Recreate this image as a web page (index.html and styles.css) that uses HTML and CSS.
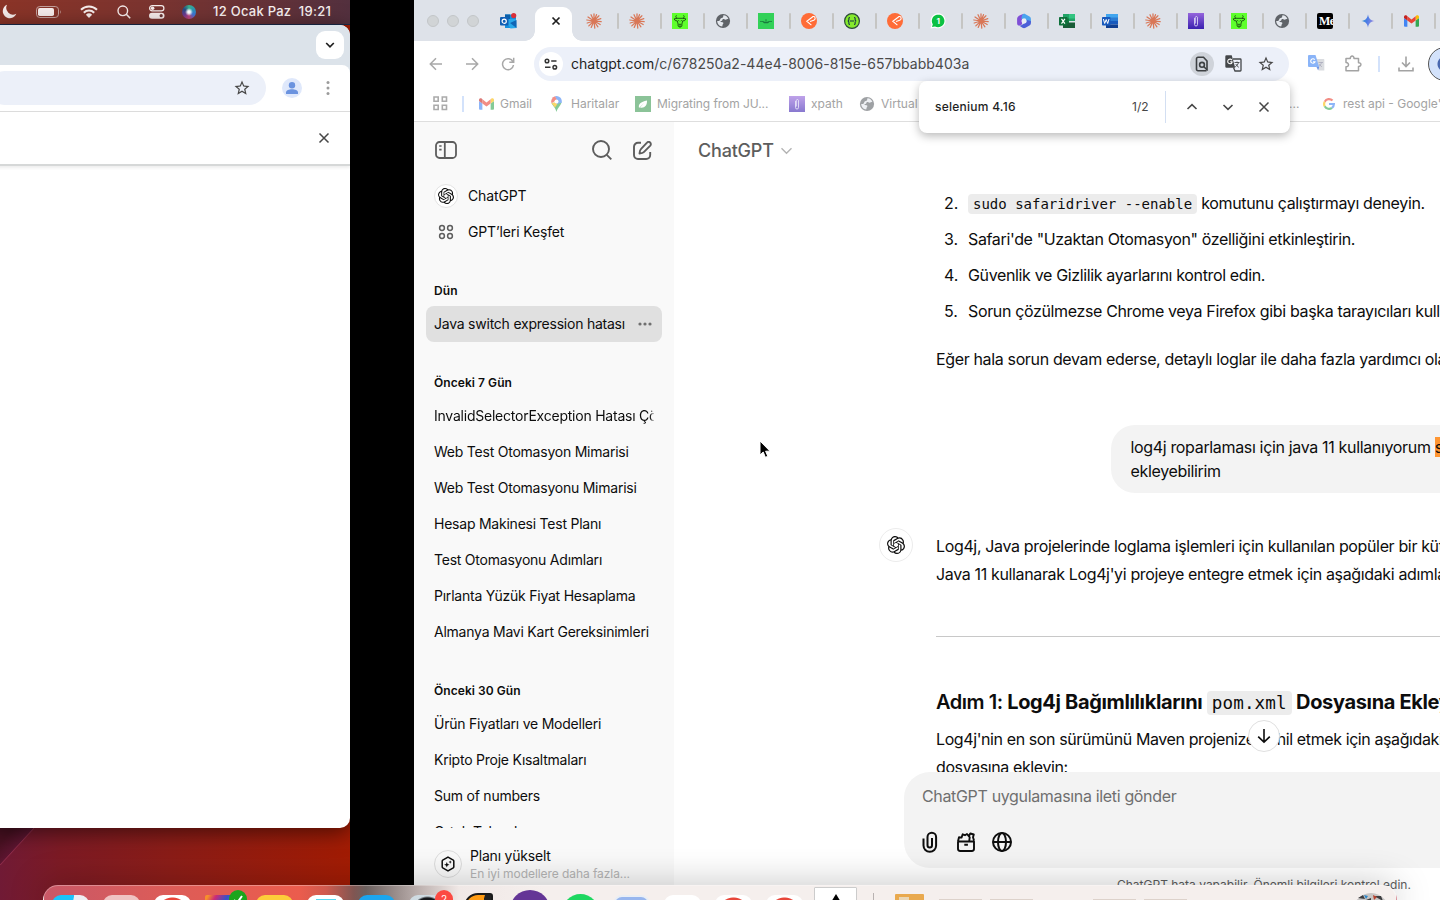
FILE: index.html
```html
<!DOCTYPE html>
<html lang="tr">
<head>
<meta charset="utf-8">
<title>ChatGPT</title>
<link rel="stylesheet" href="styles.css">
</head>
<body>
<svg class="sprite" aria-hidden="true">
  <symbol id="openai" viewBox="0 0 24 24"><path fill="currentColor" d="M22.2819 9.8211a5.9847 5.9847 0 0 0-.5157-4.9108 6.0462 6.0462 0 0 0-6.5098-2.9A6.0651 6.0651 0 0 0 4.9807 4.1818a5.9847 5.9847 0 0 0-3.9977 2.9 6.0462 6.0462 0 0 0 .7427 7.0966 5.98 5.98 0 0 0 .511 4.9107 6.051 6.051 0 0 0 6.5146 2.9001A5.9847 5.9847 0 0 0 13.2599 24a6.0557 6.0557 0 0 0 5.7718-4.2058 5.9894 5.9894 0 0 0 3.9977-2.9001 6.0557 6.0557 0 0 0-.7475-7.0729zm-9.022 12.6081a4.4755 4.4755 0 0 1-2.8764-1.0408l.1419-.0804 4.7783-2.7582a.7948.7948 0 0 0 .3927-.6813v-6.7369l2.02 1.1686a.071.071 0 0 1 .038.052v5.5826a4.504 4.504 0 0 1-4.4945 4.4944zm-9.6607-4.1254a4.4708 4.4708 0 0 1-.5346-3.0137l.142.0852 4.783 2.7582a.7712.7712 0 0 0 .7806 0l5.8428-3.3685v2.3324a.0804.0804 0 0 1-.0332.0615L9.74 19.9502a4.4992 4.4992 0 0 1-6.1408-1.6464zM2.3408 7.8956a4.485 4.485 0 0 1 2.3655-1.9728V11.6a.7664.7664 0 0 0 .3879.6765l5.8144 3.3543-2.0201 1.1685a.0757.0757 0 0 1-.071 0l-4.8303-2.7865A4.504 4.504 0 0 1 2.3408 7.872zm16.5963 3.8558L13.1038 8.364 15.1192 7.2a.0757.0757 0 0 1 .071 0l4.8303 2.7913a4.4944 4.4944 0 0 1-.6765 8.1042v-5.6772a.79.79 0 0 0-.407-.667zm2.0107-3.0231l-.142-.0852-4.7735-2.7818a.7759.7759 0 0 0-.7854 0L9.409 9.2297V6.8974a.0662.0662 0 0 1 .0284-.0615l4.8303-2.7866a4.4992 4.4992 0 0 1 6.6802 4.66zM8.3065 12.863l-2.02-1.1638a.0804.0804 0 0 1-.038-.0567V6.0742a4.4992 4.4992 0 0 1 7.3757-3.4537l-.142.0805L8.704 5.459a.7948.7948 0 0 0-.3927.6813zm1.0976-2.3654l2.602-1.4998 2.6069 1.4998v2.9994l-2.5974 1.4997-2.6067-1.4997Z"/></symbol>
  <symbol id="star" viewBox="0 0 24 24"><path fill="currentColor" d="M22 9.24l-7.19-.62L12 2 9.19 8.63 2 9.24l5.46 4.73L5.82 21 12 17.27 18.18 21l-1.63-7.03L22 9.24zM12 15.4l-3.76 2.27 1-4.28-3.32-2.88 4.38-.38L12 6.1l1.71 4.04 4.38.38-3.32 2.88 1 4.28L12 15.4z"/></symbol>
  <symbol id="globe" viewBox="0 0 16 16"><circle cx="8" cy="8" r="7.100" fill="#5f6368"/><path fill="#e3e7ed" d="M8.600 2.300c2.200.2 4 1.600 4.800 3.500-1.400 0-1.800.9-2.900 1-1.100 0-1.400-.9-2.400-.7-.9.300-.3 1.300-1.200 1.600-.8.300-1.400 0-1.400.8 0 .7 1.400.5 2.300.8.900.4.700 1.300.2 1.800-.6.500-.3 1.500-.8 2.500-2.800-.4-5-2.700-5-5.600.8.200 1.900.1 2.500-.6.700-.8.300-1.700 1.300-2.200 1-.4 2.200-.5 2.200-1.500 0-.600-.100-1 .400-1.400z"/></symbol>
  <symbol id="claude" viewBox="0 0 16 16"><g stroke="#d97757" stroke-width="1.25" stroke-linecap="round"><path d="M8 8V.9M8 8l2.500-6.300M8 8l4.900-5.200M8 8l6.800-2.300M8 8l7.200.6M8 8l6.200 3.500M8 8l3.900 5.800M8 8l.8 7.100M8 8l-2.800 6.400M8 8l-5.200 4.900M8 8l-6.800 2M8 8L.9 7M8 8L2 4M8 8L5 1.700"/></g></symbol>
  <symbol id="goat" viewBox="0 0 16 16"><path fill="#5eff2c" d="M0 0h16v16H0z"/><path d="M4.500 2.300c-1.300 1.300-.7 2.500.8 3h5.400c1.500-.5 2.100-1.700.8-3M5.300 5.300l-3.200.6 1.200 1.700 2 .3.800 3.200v2l1.900 1.200 1.900-1.200v-2l.8-3.200 2-.3 1.200-1.700-3.200-.6M6.300 7.400l1 .7M9.700 7.400l-1 .7M6.700 11.300h2.600M7 13.100h2" fill="none" stroke="#174b12" stroke-width=".9"/></symbol>
  <symbol id="postman" viewBox="0 0 16 16"><circle cx="8" cy="8" r="8" fill="#ff6c37"/><path d="M11.800 3.800L5.800 8.200l4.600 3.900M11.300 3.700a1.900 1.900 0 1 1 1.400 3.500L9 8.600" fill="none" stroke="#fff" stroke-width="1.100"/></symbol>
  <symbol id="gmail" viewBox="0 0 16 12"><path fill="#4285f4" d="M1 12h2.600V5.400L0 2.700V11a1 1 0 0 0 1 1z"/><path fill="#34a853" d="M12.400 12H15a1 1 0 0 0 1-1V2.700l-3.600 2.700z"/><path fill="#fbbc04" d="M12.400 1v4.400L16 2.700V1.500C16 .1 14.300-.7 13.200.2z"/><path fill="#ea4335" d="M3.600 5.400V1L8 4.300 12.400 1v4.400L8 8.700z"/><path fill="#c5221f" d="M0 1.500v1.200l3.600 2.700V1L2.800.2C1.700-.7 0 .1 0 1.500z"/></symbol>
  <symbol id="clip" viewBox="0 0 16 16"><defs><linearGradient id="cg" x2="0" y2="1"><stop stop-color="#9565dc"/><stop offset="1" stop-color="#3a20b0"/></linearGradient></defs><path fill="url(#cg)" d="M0 0h16v16H0z"/><path d="M6.500 5v6.500a1.500 1.500 0 0 0 3 0V4.200a1.200 1.200 0 0 0-2.200 0V10.500" fill="none" stroke="#d8d1f4" stroke-width=".9"/></symbol>
  <symbol id="close" viewBox="0 0 12 12"><path d="M1.500 1.500l9 9m0-9l-9 9" fill="none" stroke="currentColor" stroke-width="1.500"/></symbol>
  <symbol id="close-bold" viewBox="0 0 10 10"><path d="M1.500 1.500l7 7m0-7l-7 7" fill="none" stroke="currentColor" stroke-width="1.700"/></symbol>
  <symbol id="chev" viewBox="0 0 12 12"><path d="M1.500 4l4.500 4.300L10.500 4" fill="none" stroke="currentColor" stroke-width="1.600"/></symbol>
</svg>

<div class="desktop">
  <section class="screen-left">
    <header class="menubar">
      <svg width="15" height="15" viewBox="0 0 15 15"><path fill="#f6eceb" d="M5 .8a7 7 0 1 0 9.300 9A6.800 6.800 0 0 1 5 .8z"/></svg>
      <svg class="m-batt" width="26" height="12" viewBox="0 0 26 12"><rect x=".5" y=".5" width="22" height="11" rx="3.300" fill="none" stroke="#c3a09c"/><rect x="2" y="2" width="16" height="8" rx="1.800" fill="#f6eceb"/><path d="M24 4q1.600 2 0 4z" fill="#c3a09c"/></svg>
      <svg class="m-wifi" width="18" height="13" viewBox="0 0 18 13"><g fill="none" stroke="#f6eceb" stroke-width="2"><path d="M1 4.700a11.500 11.500 0 0 1 16 0M3.800 7.700a7.500 7.500 0 0 1 10.400 0"/></g><path fill="#f6eceb" d="M5.900 9.700a4.500 4.500 0 0 1 6.200 0L9 13z"/></svg>
      <svg class="m-find" width="14" height="14" viewBox="0 0 14 14"><circle cx="5.800" cy="5.800" r="4.800" fill="none" stroke="#f6eceb" stroke-width="1.400"/><path d="M9.300 9.300l3.900 3.900" stroke="#f6eceb" stroke-width="1.600"/></svg>
      <svg class="m-ctl" width="16" height="14" viewBox="0 0 16 14"><rect x=".6" y=".6" width="14.300" height="5.300" rx="2.600" fill="none" stroke="#f6eceb" stroke-width="1.200"/><circle cx="3.600" cy="3.200" r="1.800" fill="#f6eceb"/><rect x="0" y="7.700" width="15.500" height="6" rx="3" fill="#f6eceb"/><circle cx="12.200" cy="10.700" r="1.600" fill="#6b3534"/></svg>
      <span class="siri"></span>
      <span class="clock">12 Ocak Paz&nbsp; 19:21</span>
    </header>
    <div class="window-left">
      <div class="wl-tabs"><span class="wl-drop"><svg width="10" height="10" viewBox="0 0 10 10"><path d="M1.200 3L5 6.800 8.800 3" fill="none" stroke="#1f1f1f" stroke-width="1.700"/></svg></span></div>
      <div class="wl-bar">
        <span class="wl-omni"><svg width="18" height="18"><use href="#star"/></svg></span>
        <svg class="wl-user" width="20" height="20" viewBox="0 0 20 20"><circle cx="10" cy="10" r="10" fill="#dfe8fb"/><circle cx="10" cy="7.200" r="3.200" fill="#6b93df"/><path fill="#6b93df" d="M4 16v-1.600c0-2 3-3.200 6-3.200s6 1.200 6 3.200V16z"/></svg>
        <svg width="4" height="14" viewBox="0 0 4 14" fill="#9b9b9b"><circle cx="2" cy="1.600" r="1.500"/><circle cx="2" cy="7" r="1.500"/><circle cx="2" cy="12.400" r="1.500"/></svg>
      </div>
      <div class="wl-info"><svg width="12" height="12"><use href="#close"/></svg></div>
    </div>
  </section>
  <div class="bezel"></div>

  <section class="window">
    <div class="tabs">
      <div class="lights"><i></i><i></i><i></i></div>
      <svg class="outlook" width="17" height="16" viewBox="0 0 17 16"><path fill="#1490df" d="M5 1.500h11V15H5z"/><path fill="#28a8ea" d="M5 6h11l.5 9-6 .5z"/><path fill="#0a5fa8" d="M5 1.500h5V6H5z"/><path fill="#1066b5" d="M10 10l6.500-3v8z"/><rect x="0" y="4" width="8.500" height="8.500" rx="1" fill="#0f5eb4"/><circle cx="4.200" cy="8.200" r="2.100" fill="none" stroke="#fff" stroke-width="1.200"/><circle cx="13.700" cy="2.600" r="2.600" fill="#d9303a"/></svg>
      <div class="tab-active"><svg width="10" height="10"><use href="#close-bold"/></svg></div>
      <div class="tab"><svg><use href="#claude"/></svg></div>
      <div class="tab"><svg><use href="#claude"/></svg></div>
      <div class="tab"><svg><use href="#goat"/></svg></div>
      <div class="tab"><svg><use href="#globe"/></svg></div>
      <div class="tab"><svg viewBox="0 0 16 16"><path fill="#32d158" d="M0 0h16v16H0z"/><path d="M2 8h3l1.500.7h3L11 8h3v.8h-2.500L10 10.200H6L4.500 8.800H2zM7.500 6.200h1v2h-1z" fill="#187a3c"/></svg></div>
      <div class="tab"><svg><use href="#postman"/></svg></div>
      <div class="tab"><svg viewBox="0 0 16 16"><circle cx="8" cy="8" r="7.400" fill="#85ea2d" stroke="#2b4a3a" stroke-width="1.200"/><path d="M6 4.500c-1.500 0-1.100 1-1.100 2S4.500 8 3.700 8c.8 0 1.200.5 1.200 1.500s-.4 2 1.100 2M10 4.500c1.500 0 1.100 1 1.100 2s.4 1.500 1.200 1.500c-.8 0-1.200.5-1.200 1.500s.4 2-1.100 2M6 8h4" fill="none" stroke="#173647" stroke-width="1.100"/></svg></div>
      <div class="tab"><svg><use href="#postman"/></svg></div>
      <div class="tab"><svg viewBox="0 0 16 16"><path d="M.5 15.500l1-4A7.500 7.500 0 1 1 5 14.700z" fill="#fff"/><path d="M2 14l.8-2.700A6.300 6.300 0 1 1 5 13.400z" fill="#0bc143"/><text x="8.200" y="11.300" text-anchor="middle" class="wa">1</text></svg></div>
      <div class="tab"><svg><use href="#claude"/></svg></div>
      <div class="tab"><svg viewBox="0 0 16 16"><path fill="#7f4fd6" d="M8 .9C4 1.600 1.100 3.300 1.100 6v4.200c0 1.800 1.500 2.900 3.400 2L6 11.200V5.500z"/><path fill="#4aa4ee" d="M7 1.200c.8-.5 1.700-.5 2.500 0l4 2.300c.9.6 1.400 1.400 1.400 2.500v4L10 8 9.500 5.500 5.500 6C5.500 4 5.800 2 7 1.200z"/><path fill="#4b5fd8" d="M14.900 8v2c0 1-.5 1.900-1.400 2.400l-4 2.400c-1 .6-2 .6-3 0L3 12.600c1.500.2 2.500-.3 3.500-1l3.500-2.100L11 7z"/><circle cx="8" cy="8" r="2.500" fill="#e8edf5"/></svg></div>
      <div class="tab"><svg viewBox="0 0 16 16"><path fill="#21a366" d="M4 1h12v7H4z"/><path fill="#107c41" d="M4 5.500h6V15H4z"/><path fill="#185c37" d="M10 9.500h6V15H4v-4z"/><path fill="#33c481" d="M10 1h6v4.500h-6z"/><rect y="4" width="8.500" height="8.500" rx=".8" fill="#0f703b"/><path d="M2.500 5.800l3.400 4.800M5.900 5.800l-3.400 4.800" stroke="#fff" stroke-width="1.200"/></svg></div>
      <div class="tab"><svg viewBox="0 0 16 16"><path fill="#41a5ee" d="M4 1h12v4H4z"/><path fill="#2b7cd3" d="M4 4.500h12V8H4z"/><path fill="#185abd" d="M4 8h12v3.500H4z"/><path fill="#103f91" d="M4 11.500h12V15H4z"/><rect y="4" width="8.500" height="8.500" rx=".8" fill="#185abd"/><path d="M1.400 6l1.300 4.500L4.200 6.500l1.500 4L7 6" fill="none" stroke="#fff"/></svg></div>
      <div class="tab"><svg><use href="#claude"/></svg></div>
      <div class="tab"><svg><use href="#clip"/></svg></div>
      <div class="tab"><svg><use href="#goat"/></svg></div>
      <div class="tab"><svg><use href="#globe"/></svg></div>
      <div class="tab"><span class="medium">Me</span></div>
      <div class="tab"><svg viewBox="0 0 16 16"><defs><linearGradient id="gem" x2="1" y2=".2"><stop stop-color="#2aa0c8"/><stop offset=".5" stop-color="#4b7be6"/><stop offset="1" stop-color="#9a8fe0"/></linearGradient></defs><path fill="url(#gem)" d="M8 1.300C8.600 5.500 10.500 7.400 14.700 8 10.500 8.600 8.600 10.500 8 14.700 7.400 10.500 5.500 8.600 1.300 8 5.500 7.400 7.400 5.500 8 1.300z"/></svg></div>
      <div class="tab"><svg class="tab-gmail"><use href="#gmail"/></svg></div>
    </div>

    <div class="toolbar">
      <div class="nav">
        <svg width="14" height="14" viewBox="0 0 14 14"><path d="M13 7H1.500M7 1.300L1.300 7 7 12.700"/></svg>
        <svg width="14" height="14" viewBox="0 0 14 14"><path d="M1 7h11.500M7 1.300L12.700 7 7 12.700"/></svg>
        <svg width="14" height="14" viewBox="0 0 14 14"><path d="M12 4.800A5.500 5.500 0 1 0 12.500 8M12.700.8v4.400H8.300"/></svg>
      </div>
      <div class="omnibox">
        <span class="site"><svg width="14" height="12" viewBox="0 0 14 12" fill="none" stroke="#333" stroke-width="1.500"><circle cx="3" cy="3" r="1.800"/><path d="M7.200 3h5.300M1 9.300h5.500"/><circle cx="10.800" cy="9.300" r="1.800"/></svg></span>
        <span class="url"><b>chatgpt.com</b>/c/678250a2-44e4-8006-815e-657bbabb403a</span>
        <span class="find-btn"><svg width="14" height="16" viewBox="0 0 14 16" fill="none" stroke="#3d4043" stroke-width="1.600"><path d="M12 13.500V5L8.500 1.300H3A1.500 1.500 0 0 0 1.500 2.800v10.400a1.500 1.500 0 0 0 1.500 1.500h8.500"/><circle cx="7" cy="8.800" r="2.400"/><path d="M8.700 10.500l4 4"/></svg></span>
        <svg class="trans" width="17" height="17" viewBox="0 0 17 17"><path d="M8 4h7.200c.5 0 .8.300.8.800v10.400c0 .5-.3.800-.8.800H10L8.500 12.500" fill="none" stroke="#44474a" stroke-width="1.300"/><path fill="#44474a" d="M1.500.3h5.200l3.500 12.500H1.500A1.200 1.200 0 0 1 .3 11.600V1.500A1.200 1.200 0 0 1 1.500.3z"/><path d="M7 5.200A2.300 2.300 0 1 0 7 7.600V6.700H5.200" fill="none" stroke="#fff" stroke-width="1.100"/><path d="M9.500 7.500h5M12 6.500v1M13.500 7.500c-.5 2-1.800 3.500-3.300 4.300M10.800 9c.7 1.500 1.700 2.500 3 3.300" fill="none" stroke="#44474a" stroke-width=".9"/></svg>
        <svg class="o-star" width="18" height="18"><use href="#star"/></svg>
      </div>
      <svg class="gt" width="17" height="17" viewBox="0 0 17 17"><path fill="#dadce0" d="M7 4h8.500c.6 0 .8.300.8.800v10.700H11z"/><path fill="#8ab4f8" d="M1 0h6.500l3.700 12H1a1 1 0 0 1-1-1V1a1 1 0 0 1 1-1z"/><path fill="#6f94e4" d="M8.500 12h2.700l-1 3.500z"/><path d="M6.700 4.700A2.200 2.200 0 1 0 7 6.700H5" fill="none" stroke="#fff" stroke-width="1.100"/><path d="M10.500 7.500h4.500M13.500 7.500c-.5 2-1.500 3-2.500 3.800M11.300 9l2.500 3" fill="none" stroke="#aab" stroke-width=".8"/></svg>
      <svg class="ext" width="17" height="17" viewBox="0 0 17 17"><path d="M1 3.500h4.300c-.2-3.200 3.900-3.200 3.700 0h4.500v4.200c3.200-.1 3.200 3.800 0 3.700v4.400H1v-4c3.300.2 3.400-4.400 0-4.300z" fill="none" stroke="#a3a3a3" stroke-width="1.500" stroke-linejoin="round"/></svg>
      <i class="tb-sep"></i>
      <svg class="dl" width="16" height="16" viewBox="0 0 16 16"><path d="M8 .5v9.500M4 6.500l4 4 4-4M1 11.500v3.300h14v-3.300" fill="none" stroke="#a3a3a3" stroke-width="1.600"/></svg>
      <span class="avatar"></span>
    </div>

    <div class="bookmarks">
      <svg class="apps" width="15" height="15" viewBox="0 0 15 15" fill="none" stroke="#ababab" stroke-width="1.600"><path d="M1 1h4.200v4.200H1zM9.300 1h4.200v4.200H9.300zM1 9.300h4.200v4.200H1zM9.300 9.300h4.200v4.200H9.300z"/></svg>
      <i class="bm-sep"></i>
      <div class="bm bm-gmail"><svg width="15" height="12"><use href="#gmail"/></svg>Gmail</div>
      <div class="bm bm-maps"><svg width="11" height="16" viewBox="0 0 11 16"><path fill="#34a853" d="M.5 7c.8 2.500 4 4.500 5 9 1-4.500 4.500-6 5-10z"/><path fill="#fbbc04" d="M.6 7.200L4 11.500l4-6z"/><path fill="#4285f4" d="M4 .3a5.400 5.400 0 0 1 6.700 6.400L5.500 8z"/><path fill="#ea4335" d="M4 .3A5.300 5.300 0 0 0 .6 7.200L6 4z"/><circle cx="5.500" cy="5.400" r="2" fill="#fff"/></svg>Haritalar</div>
      <div class="bm bm-mig"><svg width="16" height="16" viewBox="0 0 16 16"><path fill="#3f9c54" d="M0 0h16v16H0z"/><path fill="#fff" d="M4 12c-.8-4 1.500-6 8-7.500.3 5-2.500 8-7 7l4-4.500z"/></svg>Migrating from JU...</div>
      <div class="bm bm-xpath"><svg width="16" height="16"><use href="#clip"/></svg>xpath</div>
      <div class="bm bm-virt"><svg width="16" height="16"><use href="#globe"/></svg>Virtual</div>
      <div class="bm bm-dots">...</div>
      <div class="bm bm-rest"><svg width="12" height="12" viewBox="0 0 12 12" fill="none" stroke-width="2.200"><path stroke="#ea4335" d="M1.700 3.700A4.900 4.900 0 0 1 9.500 2.600"/><path stroke="#fbbc04" d="M1.700 8.300a4.900 4.900 0 0 1 0-4.600"/><path stroke="#34a853" d="M1.700 8.300a4.900 4.900 0 0 0 7.300 1.500"/><path stroke="#4285f4" d="M6 6h4.900a4.900 4.900 0 0 1-1.900 3.800"/></svg>rest api - Google'da</div>
    </div>

    <div class="findbar">
      <span class="fb-q">selenium 4.16</span><span class="fb-n">1/2</span><i></i>
      <svg class="up" width="12" height="12"><use href="#chev"/></svg>
      <svg width="12" height="12"><use href="#chev"/></svg>
      <svg class="fb-x" width="12" height="12"><use href="#close"/></svg>
    </div>

    <div class="app">
      <aside class="sidebar">
        <div class="sb-top">
          <svg width="22" height="18" viewBox="0 0 22 18" fill="none" stroke="#5d5d5d" stroke-width="1.800"><rect x="1" y="1" width="20" height="16" rx="3.500"/><path d="M9.800 1v16"/><path d="M4.200 5h2.400M4.200 8.700h2.400" stroke-width="1.700"/></svg>
          <svg class="sb-search" width="20" height="20" viewBox="0 0 20 20" fill="none" stroke="#5d5d5d" stroke-width="1.900"><circle cx="9" cy="9" r="8"/><path d="M14.800 14.800L19.300 19.300"/></svg>
          <svg class="sb-new" width="19" height="19" viewBox="0 0 19 19" fill="none" stroke="#5d5d5d" stroke-width="1.900"><path d="M8 1.800H5A4 4 0 0 0 1 5.800v8.200a4 4 0 0 0 4 4h8.200a4 4 0 0 0 4-4v-3"/><path d="M14 1.700a2 2 0 0 1 3.300 2.900l-6.500 6.600c-.8.800-2 1.100-4.300 1.300.2-2.300.6-3.500 1.400-4.300z" stroke-linejoin="round"/></svg>
        </div>
        <div class="sb-row"><span class="sb-logo"><svg width="16" height="16"><use href="#openai"/></svg></span><span class="lbl">ChatGPT</span></div>
        <div class="sb-row"><span class="sb-ic"><svg width="16" height="16" viewBox="0 0 16 16" fill="none" stroke="#5d5d5d" stroke-width="1.500"><circle cx="4" cy="4" r="2.400"/><circle cx="12" cy="4" r="2.400"/><circle cx="4" cy="12" r="2.400"/><circle cx="12" cy="12" r="2.400"/></svg></span><span class="lbl">GPT’leri Keşfet</span></div>
        <div class="history">
          <h3>Dün</h3>
          <div class="item sel"><span>Java switch expression hatası</span><svg width="14" height="4" viewBox="0 0 14 4" fill="#6f6f6f"><circle cx="2" cy="2" r="1.600"/><circle cx="7" cy="2" r="1.600"/><circle cx="12" cy="2" r="1.600"/></svg></div>
          <h3>Önceki 7 Gün</h3>
          <div class="item fade"><span>InvalidSelectorException Hatası Çözümü</span></div>
          <div class="item"><span>Web Test Otomasyon Mimarisi</span></div>
          <div class="item"><span>Web Test Otomasyonu Mimarisi</span></div>
          <div class="item"><span>Hesap Makinesi Test Planı</span></div>
          <div class="item"><span>Test Otomasyonu Adımları</span></div>
          <div class="item"><span>Pırlanta Yüzük Fiyat Hesaplama</span></div>
          <div class="item"><span>Almanya Mavi Kart Gereksinimleri</span></div>
          <h3>Önceki 30 Gün</h3>
          <div class="item"><span>Ürün Fiyatları ve Modelleri</span></div>
          <div class="item"><span>Kripto Proje Kısaltmaları</span></div>
          <div class="item"><span>Sum of numbers</span></div>
          <div class="item"><span>Ortak Tekrarlı</span></div>
        </div>
        <div class="upgrade">
          <span class="up-ic"><svg width="16" height="16" viewBox="0 0 16 16" fill="none" stroke="#0d0d0d" stroke-width="1.500"><path d="M8 1.200l5.300 3a1 1 0 0 1 .5.900v5.800a1 1 0 0 1-.5.900L8 14.800l-5.300-3a1 1 0 0 1-.5-.9V5.100a1 1 0 0 1 .5-.9z"/><path fill="#0d0d0d" stroke="none" d="M6.800 6l.8 1.900 1.900.8-1.900.8-.8 1.900-.8-1.900-1.900-.8L6 7.900zM10.200 4.500l.5 1.100 1.100.5-1.100.5-.5 1.100-.5-1.100-1.100-.5 1.100-.5z"/></svg></span>
          <div><p>Planı yükselt</p><small>En iyi modellere daha fazla...</small></div>
        </div>
      </aside>

      <main class="chat">
        <div class="chat-head">ChatGPT <svg width="13" height="13" viewBox="0 0 13 13"><path d="M1.500 4.200l5 5 5-5" fill="none" stroke="currentColor" stroke-width="1.400"/></svg></div>
        <div class="thread">
          <ol>
            <li><code>sudo safaridriver --enable</code> komutunu çalıştırmayı deneyin.</li>
            <li>Safari'de "Uzaktan Otomasyon" özelliğini etkinleştirin.</li>
            <li>Güvenlik ve Gizlilik ayarlarını kontrol edin.</li>
            <li>Sorun çözülmezse Chrome veya Firefox gibi başka tarayıcıları kullanın.</li>
          </ol>
          <p class="after">Eğer hala sorun devam ederse, detaylı loglar ile daha fazla yardımcı olabilirim.</p>
          <div class="bubble">log4j roparlaması için java 11 kullanıyorum <mark>selenium 4.16</mark><br>ekleyebilirim</div>
          <div class="reply">
            <span class="bot"><svg width="18" height="18"><use href="#openai"/></svg></span>
            <p>Log4j, Java projelerinde loglama işlemleri için kullanılan popüler bir kütüphanedir.<br>Java 11 kullanarak Log4j'yi projeye entegre etmek için aşağıdaki adımları izleyin:</p>
          </div>
          <hr>
          <h2>Adım 1: <strong>Log4j Bağımlılıklarını <code>pom.xml</code> Dosyasına Ekleyin</strong></h2>
          <p class="last">Log4j'nin en son sürümünü Maven projenize dahil etmek için aşağıdaki kodu<br>dosyasına ekleyin:</p>
          <span class="down"><svg width="14" height="16" viewBox="0 0 14 16" fill="none" stroke="#0d0d0d" stroke-width="1.600"><path d="M7 1v13M1.200 8.600L7 14.200l5.800-5.600"/></svg></span>
        </div>
        <div class="composer">
          <span>ChatGPT uygulamasına ileti gönder</span>
          <div class="tools">
            <svg width="16" height="22" viewBox="0 0 16 22"><path d="M1.500 7.500v7a6.300 6.300 0 0 0 12.600 0V6a4.300 4.300 0 0 0-8.600 0v8.200a2.200 2.200 0 0 0 4.500 0V7"/></svg>
            <svg width="20" height="22" viewBox="0 0 20 22" stroke-linejoin="round"><path d="M2 10.500h16v7.300a2.200 2.200 0 0 1-2.200 2.200H4.200A2.200 2.200 0 0 1 2 17.800zM2 10.300l1-4 2.500.3 1.200-3.300 2.300.9 2-1.200 1.800 2.200M13.300 9.500l.4-3.200-.9-1.100 1.500-2.700 3.500 1-.8 2.700 1 3.300M8.300 13.800h3.600" stroke-width="1.900"/></svg>
            <svg width="22" height="22" viewBox="0 0 22 22"><circle cx="11" cy="11" r="9"/><ellipse cx="11" cy="11" rx="4" ry="9"/><path d="M2 11h18"/></svg>
          </div>
        </div>
        <footer>ChatGPT hata yapabilir. Önemli bilgileri kontrol edin.</footer>
      </main>
    </div>
    <svg class="cursor" width="12" height="19" viewBox="0 0 12 19"><path d="M1 1v14l3.200-3 2.200 5.300 2.400-1-2.200-5.100H11z" fill="#000" stroke="#fff" stroke-width="1"/></svg>
  </section>
</div>

<div class="dock">
  <i class="d finder"></i><i class="d launch"></i><i class="d chrome"></i><i class="d jet"></i><i class="d notes"></i><i class="d remind"></i><i class="d store"></i><i class="d bird"></i><i class="d orange"></i><i class="d purple"></i><i class="d spotify"></i><i class="d preview"></i><i class="d white"></i><i class="d chrome"></i><i class="d chrome"></i><i class="d arrow"><svg width="16" height="13" viewBox="0 0 16 13"><path d="M8 0l8 13H0z"/></svg></i>
  <i class="d-sep"></i><i class="d folder"></i><i class="faint"></i><i class="faint"></i><i class="faint gap"></i><i class="faint"></i>
  <svg class="trash" width="34" height="10" viewBox="0 0 34 10"><path fill="#c8c5c4" d="M1 10Q8 1 17 1t16 9z"/><path fill="#3d3d40" d="M4 6l5-3 2 4zM20 4l7 0 2 5zM12 8l5-2v4z"/><path fill="#2d86c8" d="M10 3l4 1-2 3z"/><path fill="#b8402c" d="M19 3l4 2-3 3z"/></svg>
  <b class="badge ok"><svg width="10" height="9" viewBox="0 0 10 9"><path d="M1 5l3 3 5-7" fill="none" stroke="#fff" stroke-width="2"/></svg></b>
  <b class="badge two">2</b>
</div>
</body>
</html>
```
FILE: styles.css
```css
* { box-sizing: border-box; }
html { overflow: hidden; }
body { margin: 0; width: 1440px; height: 900px; overflow: hidden; position: relative; background: #000; font-family: Inter, "Open Sans", sans-serif; color: #0d0d0d; }
svg { display: block; flex: none; }
p, h2, h3, ol { margin: 0; padding: 0; font-weight: 400; }
i, b { font-style: normal; font-weight: 400; }
.sprite { position: absolute; width: 0; height: 0; }
.desktop { display: grid; grid-template-columns: 350px 64px 1026px; height: 900px; }

/* left display */
.screen-left { overflow: hidden; display: flex; flex-direction: column; background: linear-gradient(to bottom right, #4a1122 20%, #5c1530 48.500%, #8d2b48 50%, transparent 52%) 0 828px / 34px 37px no-repeat, linear-gradient(90deg, #701a35 0, #7d1b25 60px, #8c1d18 170px, #a31c04 350px); }
.menubar { flex: none; height: 25px; display: flex; align-items: center; padding: 0 0 1px 2px; background: linear-gradient(90deg, #8b3427, #7a3430 45%, #53303e); border-bottom: 1px solid #1b2b4b; }
.m-batt { margin-left: 19px; }
.m-wifi { margin-left: 18px; }
.m-find { margin-left: 19px; }
.m-ctl { margin-left: 18px; }
.siri { width: 14px; height: 14px; border-radius: 50%; margin-left: 17px; background: radial-gradient(circle at 50% 50%, #fff 0 12%, transparent 40%), conic-gradient(#3bb08c, #2a97b5, #3f75d8, #c6437a, #6b3a90, #284a80, #3bb08c); }
.clock { margin-left: 17px; font-size: 13px; line-height: 20px; font-weight: 500; color: #f8f0f0; white-space: nowrap; letter-spacing: .26px; padding-bottom: 1px; }
.window-left { height: 803px; background: #fff; border-radius: 10px; margin-left: -12px; overflow: hidden; box-shadow: 0 4px 22px rgba(0,0,0,.55); display: flex; flex-direction: column; }
.wl-tabs { height: 40px; background: #dce3ea; padding: 6px 6px 0 0; display: flex; justify-content: flex-end; box-shadow: 0 10px #dce3ea; }
.wl-drop { width: 28px; height: 28px; border-radius: 9px; background: #fff; display: grid; place-items: center; }
.wl-bar { position: relative; height: 47px; background: #fff; border-radius: 0 8px 0 0; border-bottom: 1px solid #dcdcdc; display: flex; align-items: center; }
.wl-omni { width: 278px; height: 34px; background: #ecf0f9; border-radius: 17px; display: flex; align-items: center; justify-content: flex-end; padding-right: 15px; color: #474747; }
.wl-user { margin: 0 24px 0 16px; }
.wl-info { height: 54px; border-bottom: 2px solid #d6d8d8; box-shadow: 0 2px 3px #eee; display: flex; align-items: center; justify-content: flex-end; padding-right: 20px; color: #474747; }

/* browser window */
.window { position: relative; background: #fff; overflow: hidden; display: flex; flex-direction: column; }
.tabs { flex: none; height: 41px; background: #dee2e9; display: flex; align-items: center; }
.lights { display: flex; gap: 8px; padding-left: 13px; }
.lights i { width: 12px; height: 12px; border-radius: 50%; background: #d1d4d6; border: 1px solid #c3c6c8; }
.outlook { margin: 0 0 0 21px; }
.tab-active { flex: none; align-self: flex-end; position: relative; width: 37px; height: 34px; background: #fff; border-radius: 9px 9px 0 0; margin: 0 4px 0 18px; display: grid; place-items: center; padding: 0 0 7px 5px; color: #1f1f1f; }
.tab-active::before, .tab-active::after { content: ""; position: absolute; bottom: 0; width: 10px; height: 10px; }
.tab-active::before { left: -10px; background: radial-gradient(circle at 0 0, transparent 9.500px, #fff 10px); }
.tab-active::after { right: -10px; background: radial-gradient(circle at 100% 0, transparent 9.500px, #fff 10px); }
.tab { flex: none; width: 43px; display: flex; align-items: center; padding-left: 10px; }
.tab::after { content: ""; flex: none; width: 2px; height: 16px; background: #c5c5c3; border-radius: 1px; margin-left: 15px; }
.tab svg { width: 16px; height: 16px; }
.tab .tab-gmail { width: 15px; height: 12px; margin: 0 .5px; }
.wa { font: 700 8px Inter, sans-serif; fill: #fff; }
.medium { flex: none; width: 16px; height: 16px; border-radius: 2px; background: #000; color: #fff; font: 700 12px/16px "Liberation Serif", serif; letter-spacing: -.6px; padding-left: 2px; overflow: hidden; }

.toolbar { flex: none; height: 45px; display: flex; align-items: center; }
.nav { flex: none; display: flex; gap: 22px; padding-left: 15px; width: 120px; }
.nav svg { fill: none; stroke: #a8a8a8; stroke-width: 1.500; }
.omnibox { flex: none; width: 755px; height: 34px; border-radius: 17px; background: #ecf0f9; display: flex; align-items: center; padding-left: 5px; color: #474747; }
.site { flex: none; width: 24px; height: 24px; border-radius: 50%; background: #fff; display: grid; place-items: center; }
.url { flex: none; margin-left: 8px; font-size: 14px; width: 619px; white-space: nowrap; letter-spacing: .02px; color: #4a4a4a; }
.url b { color: #1f1f1f; }
.find-btn { flex: none; width: 24px; height: 24px; border-radius: 50%; background: #cfd3da; display: grid; place-items: center; }
.trans { margin-left: 11px; }
.o-star { margin-left: 15px; }
.gt { margin-left: 19px; }
.ext { margin-left: 20px; }
.tb-sep { flex: none; width: 2px; height: 16px; background: #d3e2fb; margin-left: 16px; }
.dl { margin-left: 18px; }
.avatar { flex: none; width: 34px; height: 34px; border-radius: 50%; margin-left: 14px; background: radial-gradient(circle, #4968b0 0 7px, #d3e2fb 8px); border: 1px solid #555; }

.bookmarks { flex: none; height: 36px; border-bottom: 1px solid #dedede; display: flex; align-items: center; padding-left: 19px; font-size: 12px; color: #a3a3a3; white-space: nowrap; }
.bm { flex: none; display: flex; align-items: center; }
.bm svg { opacity: .6; }
.bm-sep { flex: none; width: 2px; height: 16px; background: #d3e2fb; margin: 0 15px 0 14px; }
.bm-gmail { gap: 6px; width: 72px; }
.bm-maps { gap: 9px; width: 84px; }
.bm-mig { gap: 6px; width: 154px; letter-spacing: -.06px; }
.bm-xpath { gap: 6px; width: 70px; }
.bm-virt { gap: 6px; width: 430px; }
.bm-dots { width: 34px; }
.bm-rest { gap: 8px; }

.findbar { position: absolute; z-index: 5; left: 505px; top: 81px; width: 371px; height: 52px; background: #fff; border-radius: 8px; box-shadow: 0 3px 10px rgba(0,0,0,.28); display: flex; align-items: center; padding-left: 16px; font-size: 12px; color: #474747; }
.findbar span { flex: none; padding-bottom: 1px; }
.fb-q { font-weight: 500; color: #1f1f1f; width: 197px; letter-spacing: .25px; }
.fb-n { width: 33px; }
.findbar i { flex: none; width: 1px; height: 32px; background: #d3dff2; margin-right: 20px; }
.findbar svg { margin-right: 24px; }
.findbar .fb-x { margin-right: 0; }
.findbar .up { transform: rotate(180deg); }

.app { flex: 1; min-height: 0; display: grid; grid-template-columns: 260px 766px; }
.sidebar { background: #f9f9f9; display: flex; flex-direction: column; font-size: 14px; min-height: 0; white-space: nowrap; letter-spacing: -.14px; }
.sb-top { height: 56px; flex: none; display: flex; align-items: center; padding-left: 21px; }
.sb-search { margin-left: 135px; }
.sb-new { margin-left: 21px; }
.sb-row { flex: none; height: 36px; display: flex; align-items: center; padding-left: 20px; }
.lbl { padding-bottom: 1px; }
.sb-logo { width: 24px; height: 24px; border: 1px solid #e3e3e3; background: #fff; border-radius: 50%; display: grid; place-items: center; margin-right: 10px; }
.sb-ic { width: 24px; display: grid; place-items: center; margin-right: 10px; }
.history { height: 578px; flex: none; overflow: hidden; padding: 0 12px; letter-spacing: -.23px; }
.history h3 { font-size: 12px; font-weight: 600; line-height: 16px; padding: 33px 8px 7px; letter-spacing: .06px; }
.item { height: 36px; display: flex; align-items: center; justify-content: space-between; padding: 0 10px 0 8px; border-radius: 8px; }
.item span { padding-bottom: 1px; }
.item.sel { background: #e0e0e0; }
.item.fade span { flex: none; width: 220px; overflow: hidden; -webkit-mask-image: linear-gradient(90deg, #000 216px, transparent 221px); }
.upgrade { flex: none; display: flex; padding: 18px 0 0 20px; gap: 8px; }
.up-ic { width: 28px; height: 28px; margin-top: 4px; border: 1px solid #dcdcdc; border-radius: 50%; display: grid; place-items: center; }
.upgrade p { line-height: 20px; letter-spacing: -.2px; }
.upgrade small { display: block; font-size: 12px; line-height: 16px; color: #b4b4b4; letter-spacing: -.07px; }

.chat { display: flex; flex-direction: column; overflow: hidden; font-size: 16px; white-space: nowrap; letter-spacing: -.355px; }
.chat-head { flex: none; height: 56px; display: flex; align-items: center; gap: 6px; padding-left: 24px; font-size: 18px; font-weight: 500; color: #5d5d5d; letter-spacing: -.2px; }
.chat-head svg { color: #b4b4b4; margin-top: 1px; }
.thread { position: relative; flex: none; height: 594px; padding: 11px 0 0 262px; line-height: 28px; overflow: hidden; }
.thread ol { padding-left: 32px; list-style: none; counter-reset: step 1; }
.thread li { height: 28px; margin-bottom: 8px; counter-increment: step; }
.thread li::before { content: counter(step) "."; display: inline-block; width: 24px; margin-left: -24px; letter-spacing: 0; }
.thread code { font-family: "DejaVu Sans Mono", monospace; background: #ececec; border-radius: 4px; }
.thread li code { font-size: 14px; letter-spacing: 0; padding: 2px 5px; }
.after { padding-top: 12px; }
.bubble { margin: 52px 0 0 174.500px; width: 600px; height: 68px; padding: 10px 20px; background: #f3f3f3; border-radius: 24px; line-height: 24px; letter-spacing: -.34px; }
.bubble mark { background: #ff9632; color: inherit; }
.reply { margin: 39px 0 0 -57px; display: flex; }
.bot { flex: none; width: 34px; height: 34px; margin: -4px 23px 0 0; border: 1px solid #ececec; border-radius: 50%; display: grid; place-items: center; }
.thread hr { border: 0; border-top: 1px solid #c8c8c8; margin: 48px 0 0; }
.thread h2 { margin-top: 49px; height: 32px; font-size: 20px; font-weight: 600; line-height: 32px; letter-spacing: -.46px; }
.thread h2 strong { font-weight: 700; letter-spacing: -.35px; }
.thread h2 code { font-weight: 400; font-size: 17.600px; letter-spacing: .1px; padding: 2px 5px; }
.last { margin-top: 7px; letter-spacing: -.4px; }
.down { position: absolute; left: 574px; top: 542px; width: 32px; height: 32px; border-radius: 50%; background: #fff; border: 1px solid #e0e0e0; display: grid; place-items: center; }
.composer { flex: none; height: 96px; margin-left: 230px; border-radius: 26px 0 0 26px; background: #f3f3f3; padding: 11px 18px; color: #6f6f6f; line-height: 26px; letter-spacing: -.34px; }
.tools { display: flex; align-items: center; margin-top: 22px; }
.tools svg { fill: none; stroke: #0d0d0d; stroke-width: 2; margin-right: 15px; }
.tools svg:first-child { margin-right: 18px; }
footer { margin: 9px 0 0 443px; font-size: 12px; line-height: 16px; color: #5d5d5d; letter-spacing: 0; }
.cursor { position: absolute; left: 345px; top: 440px; }

/* dock */
.dock { position: absolute; left: 43px; top: 885px; width: 1354px; height: 15px; border-radius: 15px 15px 0 0; border: 1px solid rgba(255,255,255,.3); border-bottom: 0; background: linear-gradient(90deg, #c95867 0, #dd5c57 130px, #eb5c4d 255px, #d05a4e 282px, #805652 310px, #6c615f 322px, #8f8381 345px, #bdb1af 375px, #f0e8e6 415px, #f5efed 500px); box-shadow: 0 4px 36px rgba(0,0,0,.42); display: flex; align-items: flex-start; gap: 14px; padding: 9px 8px 0; overflow: hidden; }
.d { flex: none; width: 37px; height: 37px; border-radius: 9px; background: #fff; }
.finder { background: linear-gradient(100deg, #1cc4fa 50%, #eeeef2 52%); }
.launch { background: #efc3c3; }
.chrome { background: radial-gradient(circle at 50% 18px, #e8463a 0 15px, #fff 16px); }
.jet { background: linear-gradient(120deg, #f7902a 6%, #cc2a78 20%, #3554c8 40%, #8a3cc0 60%); border-radius: 2px; }
.notes { background: #fdcd3a; }
.remind { background: linear-gradient(#58d7f0, #58d7f0) 50% 4px / 20px 2px no-repeat, #fff; }
.store { background: #1ba6ee; }
.bird { background: radial-gradient(circle at 50% 17px, #16181c 0 14px, #cfdbe2 16px); }
.orange { background: linear-gradient(100deg, #ff9b13 60%, #222 62%); border: 2px solid #1a1a1a; border-radius: 14px 3px 0 0; width: 29px; margin: -2px 4px 0; }
.purple { width: 40px; height: 40px; margin: -5px -2px 0 -1px; border-radius: 50%; background: #643596; }
.spotify { border-radius: 50%; background: #1ed760; margin-top: -1px; }
.preview { background: #98b6ee; border: 2px solid #e9eef5; }
.arrow { width: 43px; margin: -8px -3px 0; background: #fff; border: 1px solid #ccc; border-radius: 1px; display: flex; justify-content: center; padding-top: 6px; }
.d-sep { flex: none; width: 1px; height: 30px; background: #b8b2b1; margin-left: 5px; margin-top: -2px; }
.folder { width: 29px; border-radius: 1px; margin: -1px 1px 0 7px; background: linear-gradient(#ead6b5, #ead6b5) 4px 3px / 10px 10px no-repeat, #e9a94e; }
.faint { flex: none; width: 43px; height: 10px; margin: 4px -6px 0 0; background: #ddd2cb; }
.faint.gap { margin-left: 52px; }
.trash { position: absolute; left: 1310px; top: 6px; }
.badge { position: absolute; top: 4px; width: 18px; height: 18px; border-radius: 50%; display: grid; place-items: center; }
.ok { left: 185px; background: #1ba51c; }
.two { left: 391px; background: #fc4a42; color: #fff; font-size: 10px; }
```
